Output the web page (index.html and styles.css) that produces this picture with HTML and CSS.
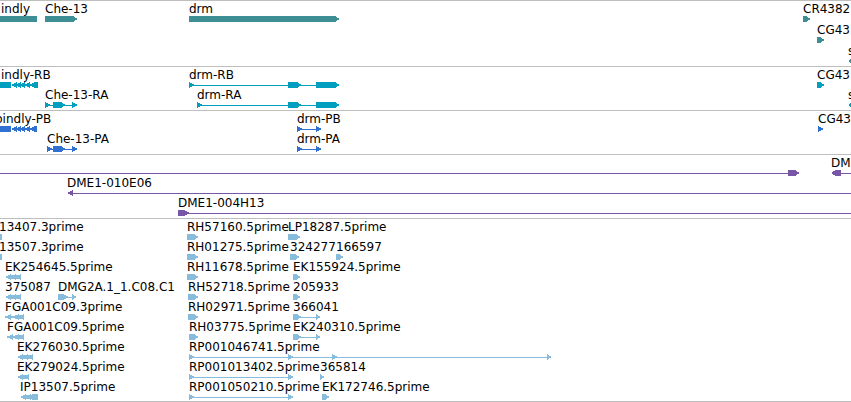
FILE: index.html
```
<!DOCTYPE html>
<html lang="en">
<head>
<meta charset="utf-8">
<title>Genome browser</title>
<link rel="stylesheet" href="styles.css">
</head>
<body>
<main class="tracks">
  <section class="track genes" aria-label="Genes">
    <div class="row">
      <span class="name" style="left:1px">indly</span><span class="name" style="left:45px">Che-13</span><span class="name" style="left:189px">drm</span><span class="name" style="left:803px">CR4382</span>
      <svg class="glyphs"><path d="M0 0h37v6H0zM45 0h28l5 3-5 3H45zM189 0h146l5 3-5 3H189zM803 0h3l5 3-5 3h-3z"/></svg>
    </div>
    <div class="row">
      <span class="name" style="left:817px">CG43</span>
      <svg class="glyphs"><path d="M817 0h3l5 3-5 3h-3z"/></svg>
    </div>
    <div class="row">
      <span class="name" style="left:848px">s</span>
      <svg class="glyphs"><path d="M848 3l5-3v6z"/></svg>
    </div>
  </section>

  <section class="track transcripts" aria-label="Transcripts">
    <div class="row">
      <span class="name" style="left:1px">indly-RB</span><span class="name" style="left:189px">drm-RB</span><span class="name" style="left:817px">CG43</span>
      <svg class="glyphs"><path d="M0 0h11v6H0zM11 3l6-3v6zM16 3l5-3v6zM20 3l5-3v6zM24 3l6-3v6zM29 3l6-3h3v6h-3zM12 2h24v2H12zM189 0l6 3-6 3zM189 3h127v1H189zM288 0h9l5 3-5 3h-9zM316 0h19l5 3-5 3h-19zM817 0h3l5 3-5 3h-3z"/></svg>
    </div>
    <div class="row">
      <span class="name" style="left:45px">Che-13-RA</span><span class="name" style="left:197px">drm-RA</span><span class="name" style="left:848px">s</span>
      <svg class="glyphs"><path d="M45 0l6 3-6 3zM45 3h30v1H45zM53 0h8l5 3-5 3h-8zM72 0l6 3-6 3zM197 0l6 3-6 3zM197 3h119v1H197zM288 0h9l5 3-5 3h-9zM316 0h19l5 3-5 3h-19zM848 3l5-3v6z"/></svg>
    </div>
  </section>

  <section class="track proteins" aria-label="Proteins">
    <div class="row">
      <span class="name" style="left:-5px">bindly-PB</span><span class="name" style="left:297px">drm-PB</span><span class="name" style="left:818px">CG43</span>
      <svg class="glyphs"><path d="M0 0h11v6H0zM11 3l6-3v6zM16 3l5-3v6zM20 3l5-3v6zM24 3l6-3v6zM29 3l6-3h2v6h-2zM12 2h24v2H12zM297 0l6 3-6 3zM297 3h20v1h-20zM316 0l6 3-6 3zM818 0l6 3-6 3z"/></svg>
    </div>
    <div class="row">
      <span class="name" style="left:47px">Che-13-PA</span><span class="name" style="left:297px">drm-PA</span>
      <svg class="glyphs"><path d="M47 0l6 3-6 3zM47 3h28v1H47zM53 0h8l5 3-5 3h-8zM72 0l6 3-6 3zM297 0l6 3-6 3zM297 3h20v1h-20zM316 0l6 3-6 3z"/></svg>
    </div>
  </section>

  <section class="track clones" aria-label="Clones">
    <div class="row">
      <span class="name" style="left:831px">DM</span>
      <svg class="glyphs"><path d="M0 3h788v1H0zM788 0h7l5 3-5 3h-7zM831 3l5-3h5v6h-5zM841 3h9999v1H841z"/></svg>
    </div>
    <div class="row">
      <span class="name" style="left:67px">DME1-010E06</span>
      <svg class="glyphs"><path d="M67 3l6-3v6zM73 3h9999v1H73z"/></svg>
    </div>
    <div class="row">
      <span class="name" style="left:178px">DME1-004H13</span>
      <svg class="glyphs"><path d="M178 0h6l6 3-6 3h-6zM184 3h9999v1H184z"/></svg>
    </div>
  </section>

  <section class="track ests" aria-label="ESTs">
    <div class="row">
      <span class="name" style="left:-1px">13407.3prime</span><span class="name" style="left:187px">RH57160.5prime</span><span class="name" style="left:288px">LP18287.5prime</span>
      <svg class="glyphs"><path d="M0 0h2v6H0zM187 0h7l5 3-5 3h-7zM288 0h8l5 3-5 3h-8z"/></svg>
    </div>
    <div class="row">
      <span class="name" style="left:-1px">13507.3prime</span><span class="name" style="left:187px">RH01275.5prime</span><span class="name" style="left:290px">324277</span><span class="name" style="left:336px">166597</span>
      <svg class="glyphs"><path d="M0 0h2v6H0zM187 0h7l5 3-5 3h-7zM290 0h5l5 3-5 3h-5zM336 0h3l5 3-5 3h-3z"/></svg>
    </div>
    <div class="row">
      <span class="name" style="left:5px">EK254645.5prime</span><span class="name" style="left:187px">RH11678.5prime</span><span class="name" style="left:293px">EK155924.5prime</span>
      <svg class="glyphs"><path d="M5 3l6-3v6zM10 3l6-3v6zM15 3l6-3v6zM8 1h13v4H8zM187 0h7l5 3-5 3h-7zM293 0h3l5 3-5 3h-3z"/></svg>
    </div>
    <div class="row">
      <span class="name" style="left:5px">375087</span><span class="name" style="left:58px">DMG2A.1_1.C08.C1</span><span class="name" style="left:188px">RH52718.5prime</span><span class="name" style="left:293px">205933</span>
      <svg class="glyphs"><path d="M5 3l6-3v6zM10 3l6-3v6zM15 3l6-3v6zM8 1h13v4H8zM58 0h5l6 3-6 3h-5zM66 3h7v1h-7zM72 0l5 3-5 3zM188 0h6l5 3-5 3h-6zM293 0h3l5 3-5 3h-3z"/></svg>
    </div>
    <div class="row">
      <span class="name" style="left:5px">FGA001C09.3prime</span><span class="name" style="left:188px">RH02971.5prime</span><span class="name" style="left:293px">366041</span>
      <svg class="glyphs"><path d="M5 3l6-3v6zM13 3l6-3v6zM18 3l6-3v6zM5 2h10v2H5zM15 1h9v4h-9zM188 0h6l5 3-5 3h-6zM293 0h4l5 3-5 3h-4zM301 3h16v1h-16zM316 0l5 3-5 3z"/></svg>
    </div>
    <div class="row">
      <span class="name" style="left:7px">FGA001C09.5prime</span><span class="name" style="left:189px">RH03775.5prime</span><span class="name" style="left:293px">EK240310.5prime</span>
      <svg class="glyphs"><path d="M7 3l6-3v6zM13 3l6-3v6zM18 3l6-3v6zM7 2h8v2H7zM15 1h9v4h-9zM189 0h5l5 3-5 3h-5zM293 0h4l5 3-5 3h-4zM301 3h16v1h-16zM316 0l5 3-5 3z"/></svg>
    </div>
    <div class="row">
      <span class="name" style="left:17px">EK276030.5prime</span><span class="name" style="left:189px">RP001046741.5prime</span>
      <svg class="glyphs"><path d="M17 3l6-3v6zM22 3l6-3v6zM27 3l6-3v6zM20 1h13v4H20zM189 0l6 3-6 3zM189 3h360v1H189zM288 0l6 3-6 3zM332 0l6 3-6 3zM547 0l5 3-5 3z"/></svg>
    </div>
    <div class="row">
      <span class="name" style="left:17px">EK279024.5prime</span><span class="name" style="left:189px">RP001013402.5prime</span><span class="name" style="left:320px">365814</span>
      <svg class="glyphs"><path d="M17 3l6-3v6zM23 3l6-3v6zM20 1h9v4h-9zM189 0l6 3-6 3zM189 3h100v1H189zM288 0l6 3-6 3zM320 0l5 3-5 3z"/></svg>
    </div>
    <div class="row">
      <span class="name" style="left:20px">IP13507.5prime</span><span class="name" style="left:189px">RP001050210.5prime</span><span class="name" style="left:322px">EK172746.5prime</span>
      <svg class="glyphs"><path d="M20 3l6-3v6zM25 3l6-3v6zM29 3l4-3h5v6h-5zM23 1h12v4H23zM189 0l6 3-6 3zM189 3h100v1H189zM288 0l6 3-6 3zM322 0h3l5 3-5 3h-3z"/></svg>
    </div>
  </section>
</main>
</body>
</html>
```
FILE: styles.css
```
body {
  margin: 0;
  background: #fff;
  color: #000;
  font: 12px/14px "DejaVu Sans", sans-serif;
}

.tracks {
  overflow: hidden;
  border-bottom: 1px solid #bebebe;
}

.track {
  display: flex;
  flex-direction: column;
  padding: 1px 0 2px;
  border-top: 1px solid #bebebe;
}

.genes {
  gap: 1px;
  color: #3d8f95;
}

.transcripts {
  color: #009fbf;
}

.proteins {
  color: #3070d0;
}

.clones {
  color: #7857a8;
}

.ests {
  padding-bottom: 1px;
  color: #87bcdd;
}

.row {
  position: relative;
  padding-top: 14px;
}

/* Names sit at their feature's start on the sequence axis. */
.name {
  position: absolute;
  top: 0;
  color: #000;
  white-space: nowrap;
}

.glyphs {
  display: block;
  width: 100%;
  height: 6px;
  fill: currentColor;
  shape-rendering: crispEdges;
}
```
